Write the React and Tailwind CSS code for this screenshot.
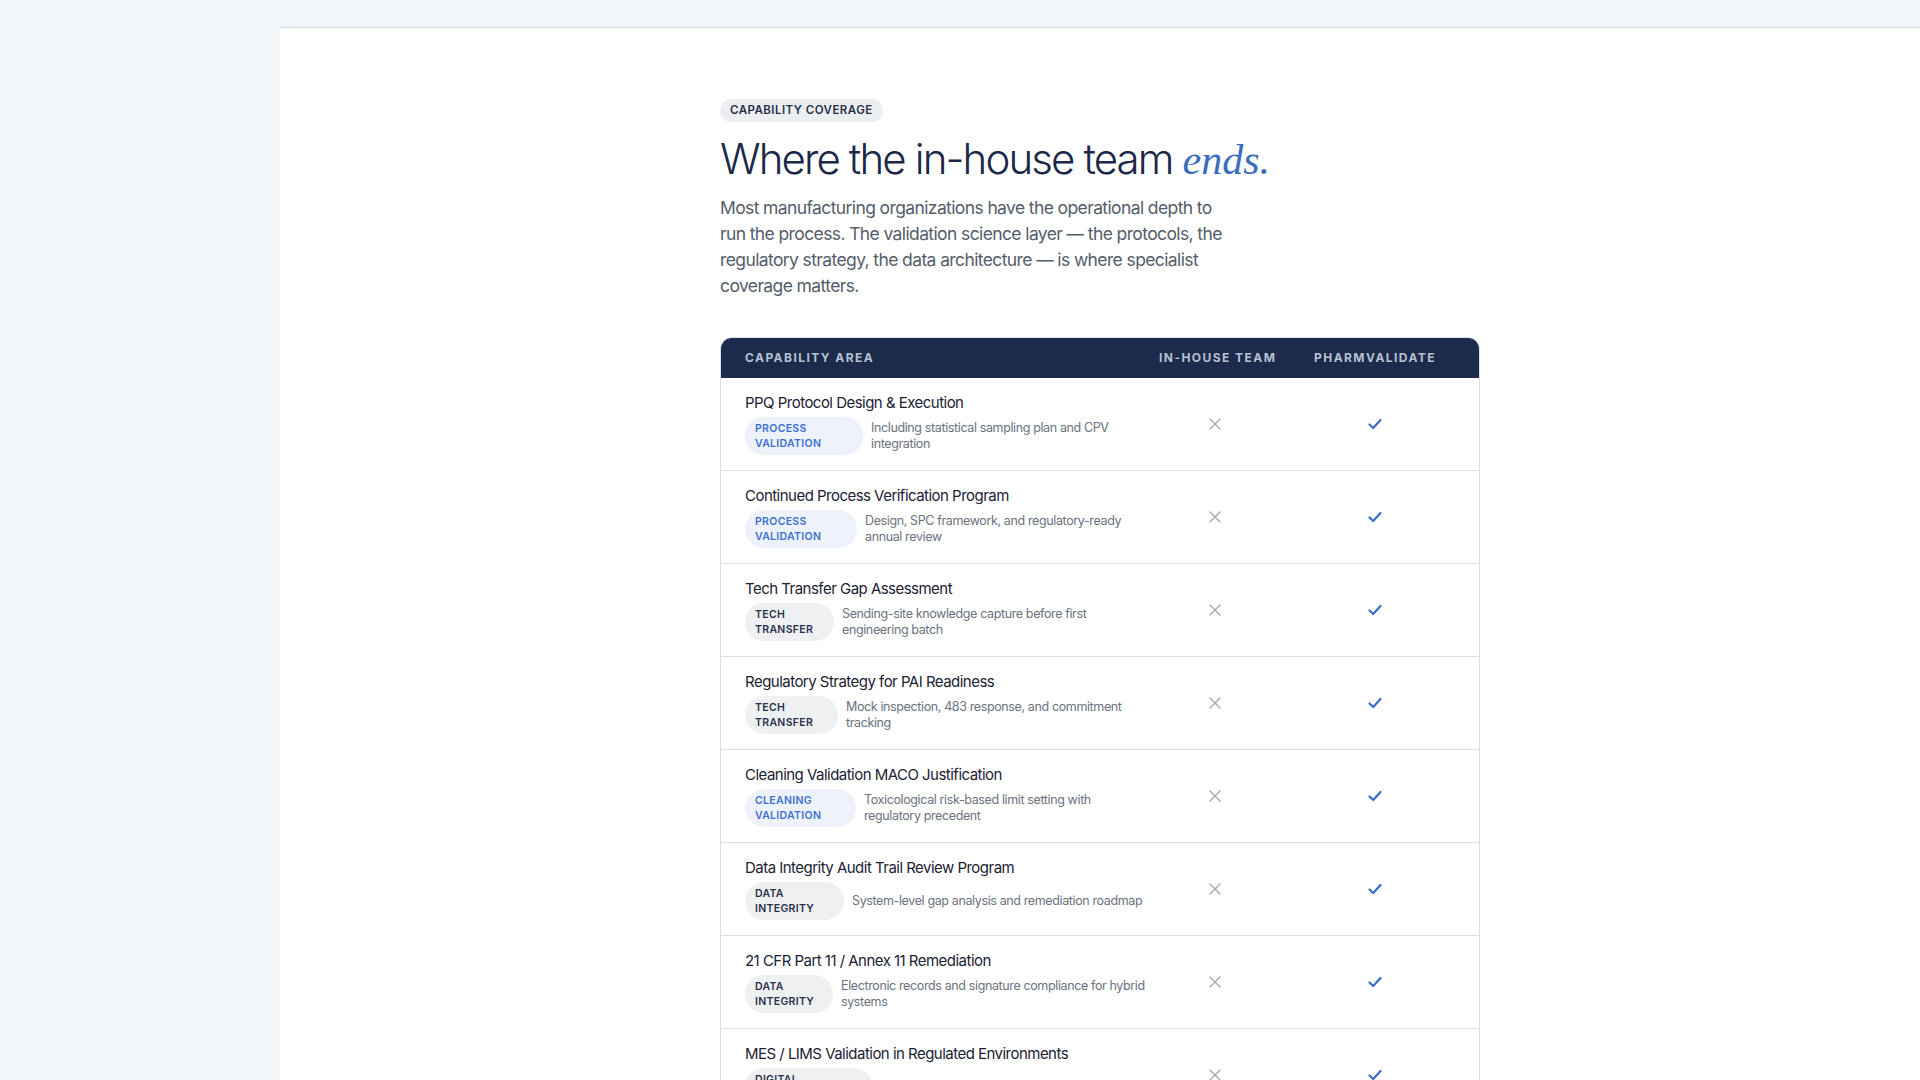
const rows = [
  ["PPQ Protocol Design & Execution", "PROCESS VALIDATION", "blue", "Including statistical sampling plan and CPV integration", "w-[118px]"],
  ["Continued Process Verification Program", "PROCESS VALIDATION", "blue", "Design, SPC framework, and regulatory-ready annual review", "w-[112px]"],
  ["Tech Transfer Gap Assessment", "TECH TRANSFER", "gray", "Sending-site knowledge capture before first engineering batch", "w-[89px]"],
  ["Regulatory Strategy for PAI Readiness", "TECH TRANSFER", "gray", "Mock inspection, 483 response, and commitment tracking", "w-[93px]"],
  ["Cleaning Validation MACO Justification", "CLEANING VALIDATION", "blue", "Toxicological risk-based limit setting with regulatory precedent", "w-[111px]"],
  ["Data Integrity Audit Trail Review Program", "DATA INTEGRITY", "gray", "System-level gap analysis and remediation roadmap", "w-[99px]"],
  ["21 CFR Part 11 / Annex 11 Remediation", "DATA INTEGRITY", "gray", "Electronic records and signature compliance for hybrid systems", "w-[88px]"],
  ["MES / LIMS Validation in Regulated Environments", "DIGITAL VALIDATION", "gray", "CSV/CSA approach aligned with GAMP 5", "w-[128px]"],
];

const X = () => (
  <svg width="14" height="14" viewBox="0 0 14 14" fill="none" stroke="#a3a8b0" strokeWidth="1.4" strokeLinecap="round"><path d="M2 2L12 12M12 2L2 12" /></svg>
);
const Check = () => (
  <svg width="18" height="18" viewBox="0 0 18 18" fill="none" stroke="#3a6cc8" strokeWidth="2.2" strokeLinecap="round" strokeLinejoin="round"><path d="M3.5 9.5L7.2 13L14.5 5" /></svg>
);

export default function App() {
  const font = { fontFamily: "Inter, 'Noto Sans', sans-serif" };
  return (
    <div className="flex h-[1080px] overflow-hidden bg-[#f3f6f9]" style={font}>
      <div className="w-[280px] shrink-0" />
      <div className="flex-1 flex flex-col">
        <div className="h-[28px] border-b border-[#d5dbe2] shrink-0" />
        <div className="flex-1 bg-white pl-[440px] pt-[68px]">
          <span className="inline-block rounded-full bg-[#eceef2] px-[10px] py-[3px] text-[11.5px] font-semibold tracking-[0.04em] text-[#27304a]">CAPABILITY COVERAGE</span>
          <h1 className="mt-[12px] text-[42px] leading-[50px] font-light tracking-[-0.045em] text-[#1b2847]">
            Where the in-house team{" "}
            <span className="italic text-[#3b6dbf] tracking-normal" style={{ fontFamily: "'Liberation Serif', serif" }}>ends.</span>
          </h1>
          <p className="mt-[10px] w-[520px] text-[17.5px] leading-[26px] text-[#555d6b] tracking-[-0.035em]">
            Most manufacturing organizations have the operational depth to run the process. The validation science layer — the protocols, the regulatory strategy, the data architecture — is where specialist coverage matters.
          </p>
          <div className="mt-[38px] w-[760px] rounded-t-[12px] border border-[#dbe0e6] border-b-0">
            <div className="grid grid-cols-[1fr_112px_208px] h-[40px] items-center bg-[#1c2b4b] rounded-t-[11px] text-[12px] font-bold tracking-[0.12em] text-[#b6c0d2]">
              <div className="pl-[24px]">CAPABILITY AREA</div>
              <div className="text-center whitespace-nowrap">IN-HOUSE TEAM</div>
              <div className="text-center">PHARMVALIDATE</div>
            </div>
            {rows.map(([t, tag, c, d, w], i) => (
              <div key={i} className="grid grid-cols-[1fr_112px_208px] h-[93px] items-center border-b border-[#dbe0e6]">
                <div className="pl-[24px] pr-[10px]">
                  <div className="text-[15px] leading-[20px] text-[#1b2233] tracking-[-0.035em]">{t}</div>
                  <div className="mt-[4px] flex items-center gap-[8px]">
                    <span className={`${w} shrink-0 rounded-full px-[10px] py-[4px] text-[10.5px] leading-[15px] font-semibold tracking-[0.03em] ${c === "blue" ? "bg-[#eef3fb] text-[#3d70d0]" : "bg-[#eff0f2] text-[#27304a]"}`}>{tag}</span>
                    <span className="text-[12.5px] leading-[16px] text-[#6b7280] tracking-[-0.03em]">{d}</span>
                  </div>
                </div>
                <div className="flex justify-center"><X /></div>
                <div className="flex justify-center"><Check /></div>
              </div>
            ))}
          </div>
        </div>
      </div>
    </div>
  );
}
